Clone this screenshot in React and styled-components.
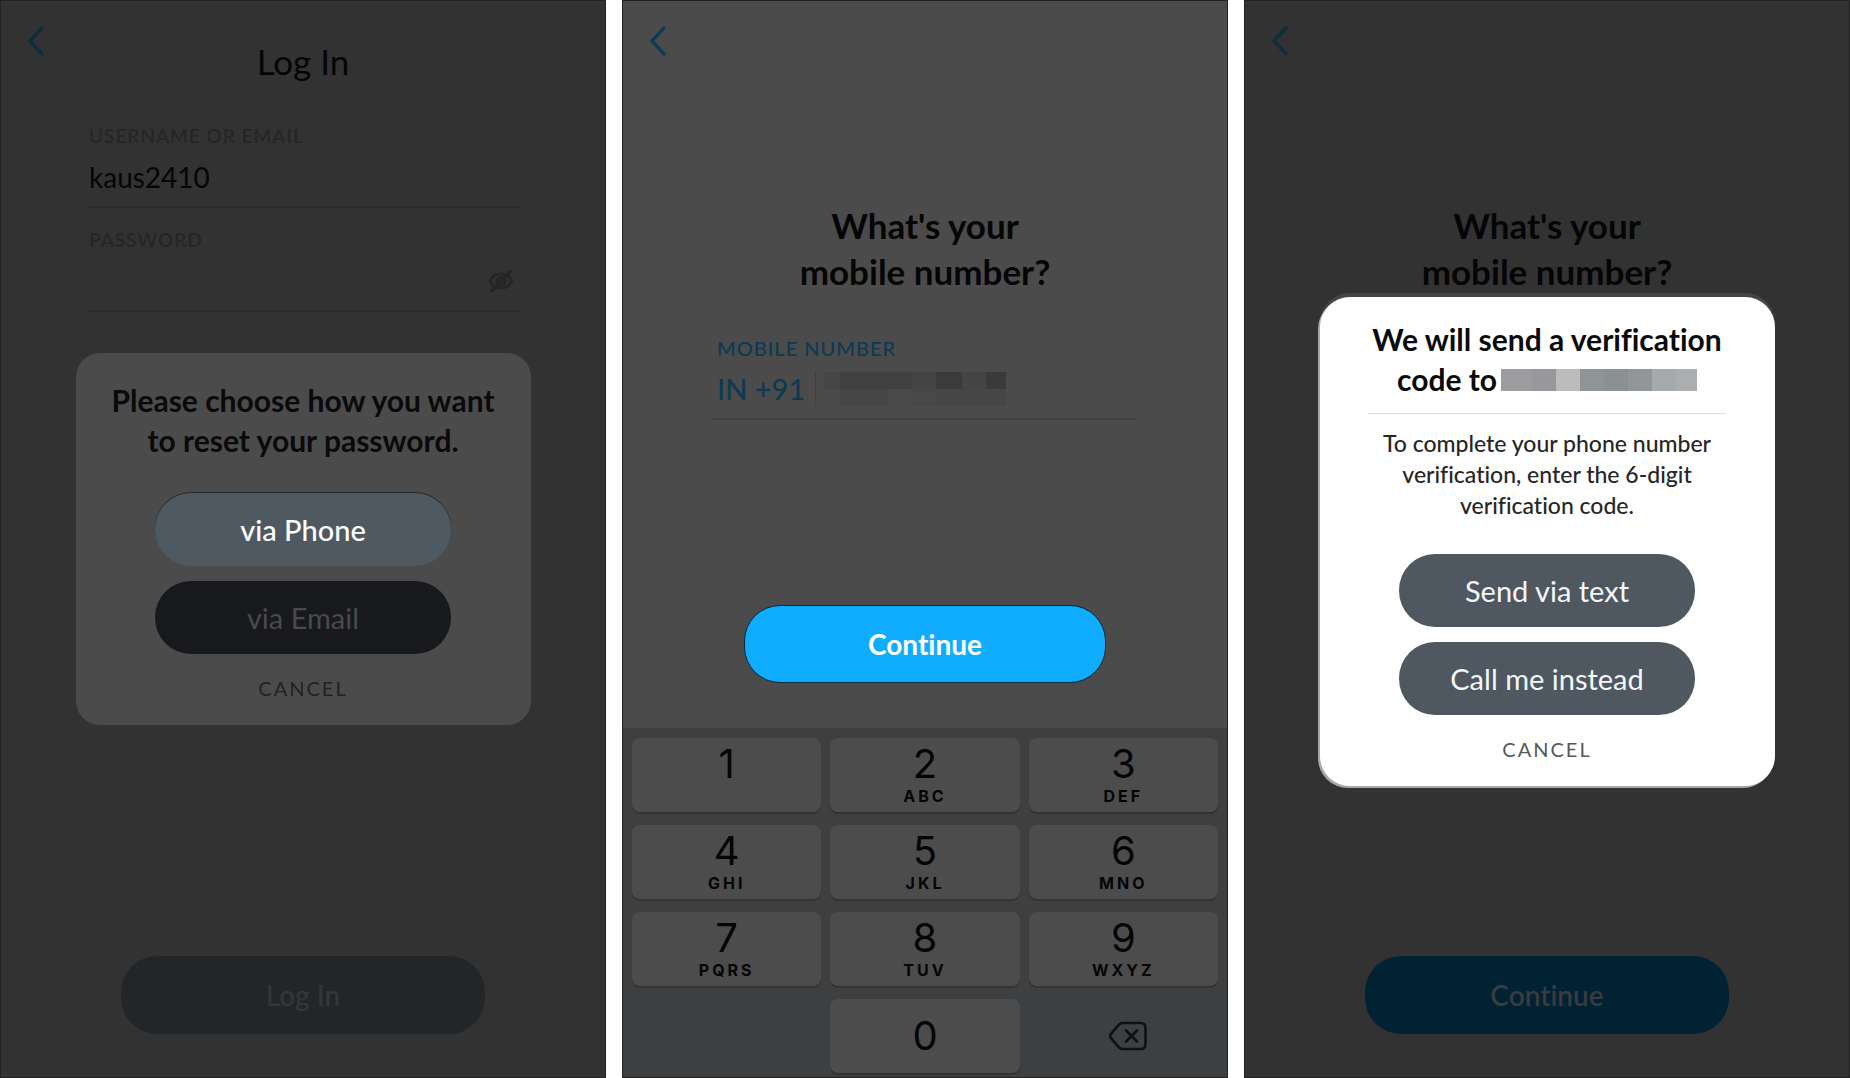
import React from "react";
import styled, { createGlobalStyle } from "styled-components";

const keys = [
  ["1", ""],
  ["2", "ABC"],
  ["3", "DEF"],
  ["4", "GHI"],
  ["5", "JKL"],
  ["6", "MNO"],
  ["7", "PQRS"],
  ["8", "TUV"],
  ["9", "WXYZ"],
];

// grey tiles that hide the phone numbers
const fieldTiles = [
  ["#464646", "#4b4b4b", 16],
  ["#404040", "#464646", 48],
  ["#414141", "#4a4a4a", 24],
  ["#444444", "#484848", 24],
  ["#3b3b3b", "#464646", 26],
  ["#444444", "#464646", 24],
  ["#3a3a3a", "#464646", 20],
];

const dialogTiles = [
  ["#9d9c9e", 31],
  ["#98979b", 24],
  ["#bcbcbc", 24],
  ["#8f9497", 24],
  ["#8b9093", 24],
  ["#929699", 24],
  ["#a4a9ac", 24],
  ["#abadaf", 21],
];

const BackLink = ({ color }) => (
  <Back href="#" aria-label="Back" $color={color}>
    <svg width="18" height="30" viewBox="0 0 18 30" fill="none">
      <path d="M15 2 L3 15 L15 28" stroke="currentColor" strokeWidth="3.4" strokeLinecap="round" />
    </svg>
  </Back>
);

const EyeOff = () => (
  <svg width="26" height="24" viewBox="0 0 26 24" fill="none" stroke="currentColor" strokeWidth="2.6">
    <path d="M2 12 C6 2.5 19 2.5 24 12 C19 21.5 6 21.5 2 12 Z" />
    <circle cx="13" cy="12" r="4" />
    <path d="M3 22.5 L23 1.5" strokeWidth="3.4" />
  </svg>
);

const DeleteIcon = () => (
  <svg width="40" height="30" viewBox="0 0 40 30" fill="none" stroke="currentColor" strokeLinejoin="round">
    <path
      d="M14.5 2 H32.5 Q37.5 2 37.5 7 V23 Q37.5 28 32.5 28 H14.5 Q12.5 28 11 26.4 L3 17.2 Q1.2 15 3 12.8 L11 3.6 Q12.5 2 14.5 2 Z"
      strokeWidth="2.6"
    />
    <path d="M18 9.5 L29 20.5 M29 9.5 L18 20.5" strokeWidth="2.6" strokeLinecap="round" />
  </svg>
);

const LoginScreen = () => (
  <Screen $bg="#323232">
    <Header>
      <BackLink color="#0c2d3a" />
      <ScreenTitle>Log In</ScreenTitle>
    </Header>
    <Form $width="432px">
      <Field $color="#262626" $line="#2b2b2b" $weight="600">
        <label htmlFor="username">USERNAME OR EMAIL</label>
        <FieldRow>
          <input id="username" type="text" defaultValue="kaus2410" />
        </FieldRow>
      </Field>
      <Field $color="#262626" $line="#2b2b2b" $weight="600">
        <label htmlFor="password">PASSWORD</label>
        <FieldRow>
          <input id="password" type="password" />
          <IconButton type="button" aria-label="Show password">
            <EyeOff />
          </IconButton>
        </FieldRow>
      </Field>
    </Form>
    <Footer>
      <MainButton $bg="#232629" $color="#343638">
        Log In
      </MainButton>
    </Footer>
    <Overlay>
      <Dialog role="dialog" aria-label="Reset password">
        <DialogTitle>
          Please choose how you want
          <br />
          to reset your password.
        </DialogTitle>
        <Choices>
          <Choice $bg="#4f5962" $color="#fff" $weight="500" $lit>
            via Phone
          </Choice>
          <Choice $bg="#17191c" $color="#494a4d">
            via Email
          </Choice>
        </Choices>
        <Cancel $color="#222">CANCEL</Cancel>
      </Dialog>
    </Overlay>
  </Screen>
);

const NumberScreen = () => (
  <Screen $bg="#4b4b4b">
    <Header>
      <BackLink color="#0d3d50" />
    </Header>
    <Question>
      What's your
      <br />
      mobile number?
    </Question>
    <Form $width="424px">
      <Field $color="#0d3a52" $line="#404040" $inset>
        <label htmlFor="mobile">MOBILE NUMBER</label>
        <FieldRow>
          <Country type="button">IN +91</Country>
          <Masked>
            <input id="mobile" type="tel" />
            <FieldMosaic>
              {fieldTiles.map(([top, bottom, width], k) => (
                <FieldTile key={k} $top={top} $bottom={bottom} $width={width} />
              ))}
            </FieldMosaic>
          </Masked>
        </FieldRow>
      </Field>
    </Form>
    <KeypadArea>
      <MainButton $bg="#10adff" $color="#fff" $lit>
        Continue
      </MainButton>
      <Keypad>
        <KeyRows>
          {keys.map(([digit, letters]) => (
            <Key key={digit}>
              {digit}
              <small>{letters}</small>
            </Key>
          ))}
        </KeyRows>
        <BottomRow>
          <span />
          <Key $center>0</Key>
          <DeleteKey aria-label="Delete">
            <DeleteIcon />
          </DeleteKey>
        </BottomRow>
      </Keypad>
    </KeypadArea>
  </Screen>
);

const VerifyScreen = () => (
  <Screen $bg="#323232">
    <Header>
      <BackLink color="#0c2d3a" />
    </Header>
    <Question>
      What's your
      <br />
      mobile number?
    </Question>
    <Footer>
      <MainButton $bg="#002233" $color="#393b3e" $weight="600">
        Continue
      </MainButton>
    </Footer>
    <Overlay>
      <Dialog role="dialog" aria-label="Verification code" $active>
        <DialogTitle>
          We will send a verification
          <br />
          code to
          <DialogMosaic>
            {dialogTiles.map(([color, width], k) => (
              <DialogTile key={k} $color={color} $width={width} />
            ))}
          </DialogMosaic>
        </DialogTitle>
        <Note>
          To complete your phone number
          <br />
          verification, enter the 6-digit
          <br />
          verification code.
        </Note>
        <Choices>
          <Choice $bg="#4f5861" $color="#f4f6fa">
            Send via text
          </Choice>
          <Choice $bg="#4f5861" $color="#f4f6fa">
            Call me instead
          </Choice>
        </Choices>
        <Cancel $color="#58585a">CANCEL</Cancel>
      </Dialog>
    </Overlay>
  </Screen>
);

const App = () => {
  return (
    <>
      <GlobalStyle />
      <Screens>
        <LoginScreen />
        <NumberScreen />
        <VerifyScreen />
      </Screens>
    </>
  );
};

export default App;

const GlobalStyle = createGlobalStyle`
  * {
    box-sizing: border-box;
  }

  body {
    margin: 0;
    background: #fff;
    font-family: Lato, "Open Sans", sans-serif;
    font-variant-ligatures: none;
  }

  button,
  input {
    margin: 0;
    padding: 0;
    border: 0;
    background: none;
    font-family: inherit;
    font-variant-ligatures: none;
    outline: none;
  }

  h1,
  h2,
  p {
    margin: 0;
  }
`;

const Screens = styled.main`
  display: grid;
  grid-template-columns: repeat(3, 1fr);
  gap: 16px;
  min-height: 100vh;
`;

const Screen = styled.section`
  position: relative;
  display: flex;
  flex-direction: column;
  align-items: center;
  background: ${({ $bg }) => $bg};
  border: 1px solid #222;
`;

const Header = styled.header`
  display: grid;
  grid-template-columns: 1fr auto 1fr;
  width: 100%;
  min-height: 81px;
  padding: 25px 26px 0;
`;

const Back = styled.a`
  justify-self: start;
  height: 30px;
  color: ${({ $color }) => $color};

  svg {
    display: block;
  }
`;

const ScreenTitle = styled.h1`
  padding-top: 15px;
  font-size: 35px;
  font-weight: 400;
  line-height: 40px;
  color: #050505;
`;

const Question = styled.h1`
  margin-top: 120px;
  font-size: 35px;
  font-weight: 700;
  line-height: 46px;
  text-align: center;
  color: #050505;
`;

const Form = styled.form`
  display: flex;
  flex-direction: column;
  gap: 20px;
  width: ${({ $width }) => $width};
  max-width: 90%;
  margin-top: 42px;
`;

const FieldRow = styled.div`
  display: flex;
  align-items: center;
  height: 60px;
  border-bottom: 2px solid;

  input {
    flex: 1;
    min-width: 0;
    font-size: 28px;
    line-height: 40px;
    color: #050505;
  }
`;

const Field = styled.div`
  label {
    display: block;
    padding-left: ${({ $inset }) => ($inset ? "4px" : "2px")};
    font-size: ${({ $inset }) => ($inset ? "20px" : "19px")};
    font-weight: ${({ $weight }) => $weight || 500};
    line-height: 24px;
    letter-spacing: 1px;
    color: ${({ $color }) => $color};
  }

  ${FieldRow} {
    padding-left: ${({ $inset }) => ($inset ? "4px" : "2px")};
    color: ${({ $color }) => $color};
    border-color: ${({ $line }) => $line};
  }
`;

const IconButton = styled.button`
  display: flex;
  padding-right: 5px;
  color: #252525;
`;

const Country = styled.button`
  padding-right: 10px;
  border-right: 1px solid #404040;
  font-size: 29px;
  font-weight: 500;
  line-height: 34px;
  white-space: nowrap;
  color: #0d3a52;
`;

const Masked = styled.div`
  position: relative;
  display: flex;
  flex: 1;
  margin-left: 8px;
`;

const FieldMosaic = styled.div`
  position: absolute;
  inset: 0;
  display: flex;
  align-items: center;
  pointer-events: none;
`;

const FieldTile = styled.span`
  width: ${({ $width }) => $width}px;
  height: 34px;
  background: ${({ $top, $bottom }) => `linear-gradient(${$top} 50%, ${$bottom} 50%)`};
`;

const Footer = styled.footer`
  margin-top: auto;
  padding-bottom: 43px;
`;

const MainButton = styled.button`
  width: ${({ $lit }) => ($lit ? "362px" : "364px")};
  height: 78px;
  border-radius: 36px;
  font-size: 28px;
  font-weight: ${({ $weight, $lit }) => ($lit ? 700 : $weight || 500)};
  color: ${({ $color }) => $color};
  background: ${({ $bg }) => $bg};
  border: ${({ $lit }) => ($lit ? "1px solid #062a40" : "0")};
`;

const KeypadArea = styled.div`
  display: flex;
  flex-direction: column;
  align-items: center;
  gap: 45px;
  width: 100%;
  margin-top: auto;
`;

const Keypad = styled.div`
  width: 100%;
  background: #3f3f3f;
`;

const KeyRows = styled.div`
  display: grid;
  grid-template-columns: repeat(3, 1fr);
  gap: 13px 9px;
  padding: 10px 9px 7px;
`;

const BottomRow = styled.div`
  display: grid;
  grid-template-columns: repeat(3, 1fr);
  gap: 9px;
  padding: 6px 9px 4px;
  background: #3d4043;
`;

const Key = styled.button`
  display: flex;
  flex-direction: column;
  align-items: center;
  justify-content: ${({ $center }) => ($center ? "center" : "flex-start")};
  gap: 4px;
  height: 74px;
  padding-top: ${({ $center }) => ($center ? "0" : "6px")};
  border-radius: 8px;
  background: #4c4c4c;
  box-shadow: 0 2px 0 #333;
  font-family: Inter, "Liberation Sans", sans-serif;
  font-size: 40px;
  line-height: 40px;
  color: #050505;

  small {
    font-size: 16px;
    font-weight: 700;
    line-height: 16px;
    letter-spacing: 3px;
  }
`;

const DeleteKey = styled.button`
  display: flex;
  align-items: center;
  justify-content: center;
  padding-left: 10px;
  color: #101014;
`;

const Overlay = styled.div`
  position: absolute;
  inset: 0;
  display: flex;
  align-items: center;
  justify-content: center;
`;

const Dialog = styled.div`
  display: flex;
  flex-direction: column;
  align-items: center;
  width: 455px;
  max-width: 94%;
  margin-top: ${({ $active }) => ($active ? "5px" : "0")};
  padding: ${({ $active }) => ($active ? "22px" : "27px")} 0 25px;
  border-radius: ${({ $active }) => ($active ? "30px" : "24px")};
  background: ${({ $active }) => ($active ? "#fff" : "#4b4b4b")};
  box-shadow: ${({ $active }) => ($active ? "-2px 2px 0 #a8a8a8, 0 -4px 0 #454545" : "none")};
`;

const DialogTitle = styled.h2`
  font-size: 30px;
  font-weight: 700;
  line-height: 40px;
  text-align: center;
  color: #0a0a0a;
`;

const DialogMosaic = styled.span`
  display: inline-flex;
  margin-left: 4px;
`;

const DialogTile = styled.span`
  width: ${({ $width }) => $width}px;
  height: 22px;
  background: ${({ $color }) => $color};
`;

const Note = styled.p`
  width: 358px;
  max-width: 90%;
  margin-top: 14px;
  padding-top: 14px;
  border-top: 1px solid #e2e2e2;
  font-size: 23px;
  font-weight: 500;
  line-height: 31px;
  text-align: center;
  white-space: nowrap;
  color: #262626;
`;

const Choices = styled.div`
  display: flex;
  flex-direction: column;
  gap: 15px;
  margin-top: 33px;
`;

const Choice = styled.button`
  width: 296px;
  height: 73px;
  border-radius: 36px;
  font-size: 29px;
  font-weight: ${({ $weight }) => $weight || 400};
  color: ${({ $color }) => $color};
  background: ${({ $bg }) => $bg};
  box-shadow: ${({ $lit }) => ($lit ? "0 -1px 0 #25282b" : "none")};
`;

const Cancel = styled.button`
  margin-top: 22px;
  font-size: 20px;
  line-height: 24px;
  letter-spacing: 2px;
  color: ${({ $color }) => $color};
`;
